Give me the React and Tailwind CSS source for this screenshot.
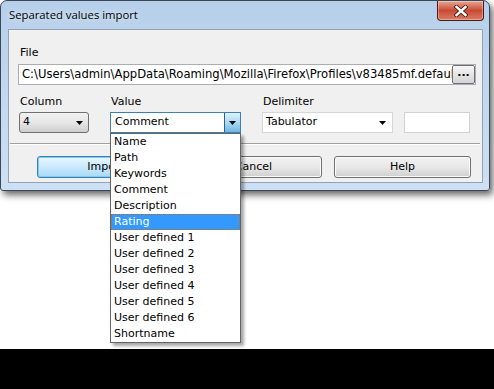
const items = [
  'Name',
  'Path',
  'Keywords',
  'Comment',
  'Description',
  'Rating',
  'User defined 1',
  'User defined 2',
  'User defined 3',
  'User defined 4',
  'User defined 5',
  'User defined 6',
  'Shortname',
];

function Arrow() {
  return (
    <svg width="7" height="4" viewBox="0 0 7 4">
      <polygon points="0,0 7,0 3.5,4" fill="#000" />
    </svg>
  );
}

function Button({ children, primary }) {
  return (
    <div
      className={`w-[137px] h-[22px] rounded-[3px] border flex items-center justify-center ${
        primary
          ? 'border-[#3c7fb1] bg-gradient-to-b from-[#eaf6fd] via-[#c9e9fc] to-[#a7d9f5] shadow-[inset_0_0_0_1px_#7ecdf2]'
          : 'border-[#707070] bg-gradient-to-b from-[#f2f2f2] via-[#e8e8e8] to-[#cfcfcf] shadow-[inset_0_0_0_1px_#fcfcfc]'
      }`}
    >
      {children}
    </div>
  );
}

function CloseButton() {
  return (
    <div className="w-[47px] h-[20px] mr-[5px] rounded-b-[4px] border border-t-0 border-[#4a1d14] bg-gradient-to-b from-[#e7a595] via-[#c94a32] to-[#d97b62] flex items-center justify-center shadow-[inset_0_0_0_1px_rgba(255,255,255,0.35)]">
      <svg width="14" height="12" viewBox="0 0 14 12">
        <path d="M2.5 2 L11.5 10 M11.5 2 L2.5 10" stroke="#3a1a14" strokeWidth="4.2" strokeLinecap="square" />
        <path d="M2.5 2 L11.5 10 M11.5 2 L2.5 10" stroke="#ffffff" strokeWidth="2.4" strokeLinecap="square" />
      </svg>
    </div>
  );
}

function Dropdown() {
  return (
    <div className="absolute left-[110px] top-[133px] w-[131px] h-[210px] bg-white border border-[#646464] shadow-[3px_3px_3px_rgba(0,0,0,0.35)] flex flex-col">
      {items.map((it) => (
        <div
          key={it}
          className={`h-[16px] leading-[14px] pl-[2px] border ${
            it === 'Rating'
              ? 'bg-[#3399ff] text-white border-dotted border-[#b86a20]'
              : 'border-transparent'
          }`}
        >
          {it}
        </div>
      ))}
    </div>
  );
}

function Window() {
  return (
    <div className="w-[490px] h-[191px] rounded-t-[7px] rounded-b-[3px] border border-[#3b4656] bg-gradient-to-b from-[#b6cfea] via-[#c3d8ef] to-[#cde0f4] shadow-[3px_4px_7px_rgba(0,0,0,0.6)] flex flex-col">
      <div className="h-[28px] flex items-start">
        <div className="pl-[8px] pt-[6px] font-['Open_Sans',sans-serif] text-[11.3px] leading-[16px] text-black [text-shadow:0_0_6px_#ffffff]">
          Separated values import
        </div>
        <div className="ml-auto">
          <CloseButton />
        </div>
      </div>

      <div className="ml-[7px] w-[475px] h-[154px] border border-[#93a3b6] bg-[#f0f0f0] flex flex-col">
        <div className="ml-[11px] mt-[16px] leading-[13px]">File</div>

        <div className="ml-[9px] mt-[5px] w-[458px] h-[21px] bg-white border border-[#abadb3] flex items-center">
          <div className="flex-1 pl-[3px] overflow-hidden whitespace-nowrap leading-[13px] text-[11.6px]">
            C:\Users\admin\AppData\Roaming\Mozilla\Firefox\Profiles\v83485mf.default
          </div>
          <div className="w-[23px] h-[19px] shrink-0 rounded-[2px] border border-[#707070] bg-gradient-to-b from-[#f6f6f6] to-[#d4d4d4] flex items-center justify-center font-bold leading-[8px] pb-[3px]">
            ...
          </div>
        </div>

        <div className="ml-[10px] mt-[10px] flex leading-[13px]">
          <div className="w-[70px] pl-[1px]">Column</div>
          <div className="w-[131px] ml-[21px] pl-[1px]">Value</div>
          <div className="w-[131px] ml-[21px] pl-[1px]">Delimiter</div>
        </div>

        <div className="ml-[10px] mt-[4px] flex h-[21px]">
          <div className="w-[70px] h-[21px] rounded-[3px] border border-[#707070] bg-gradient-to-b from-[#f2f2f2] via-[#e6e6e6] to-[#cfcfcf] flex items-center pl-[3px] pr-[5px]">
            <span className="flex-1">4</span>
            <Arrow />
          </div>
          <div className="w-[131px] h-[21px] ml-[21px] border border-[#3c7fb1] bg-white flex items-center">
            <span className="flex-1 pl-[4px]">Comment</span>
            <div className="w-[16px] h-[19px] border-l border-[#2c628b] bg-gradient-to-b from-[#dff3fd] via-[#a9d8f5] to-[#6fb6e4] flex items-center justify-center">
              <Arrow />
            </div>
          </div>
          <div className="w-[131px] h-[21px] ml-[21px] border border-[#d6d6d6] bg-white flex items-center pl-[3px] pr-[6px]">
            <span className="flex-1">Tabulator</span>
            <Arrow />
          </div>
          <div className="w-[66px] h-[21px] ml-[11px] border border-[#d2d2d2] bg-white" />
        </div>

        <div className="ml-[1px] mt-[10px] w-[470px] h-[2px] border-t border-[#a0a0a0] border-b border-b-white" />

        <div className="ml-[28px] mt-[11px] flex">
          <Button primary>Import</Button>
          <div className="ml-[11px]">
            <Button>Cancel</Button>
          </div>
          <div className="ml-[12px]">
            <Button>Help</Button>
          </div>
        </div>
      </div>
    </div>
  );
}

export default function App() {
  return (
    <div className="w-[494px] h-[389px] bg-white flex flex-col overflow-hidden font-['DejaVu_Sans',sans-serif] text-[11px] text-black">
      <div className="relative h-[349px]">
        <Window />
        <Dropdown />
      </div>
      <div className="h-[40px] bg-black" />
    </div>
  );
}
